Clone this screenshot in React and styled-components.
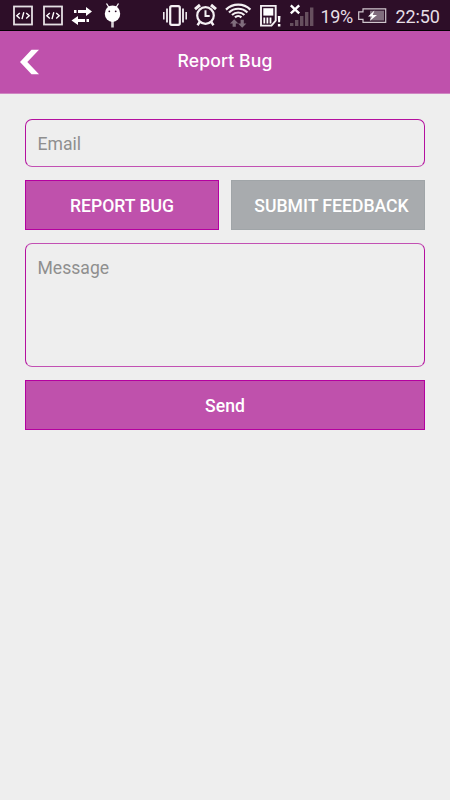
import React from 'react'
import styled, { createGlobalStyle } from 'styled-components';

const GlobalStyle = createGlobalStyle`
  * {
    box-sizing: border-box;
  }

  body {
    margin: 0;
    background-color: #eeeeee;
    font-family: Roboto, "Liberation Sans", sans-serif;
  }
`;

const Screen = styled.div`
  width: 450px;
  height: 800px;
  overflow: hidden;
  background-color: #eeeeee;
`;

const StatusBar = styled.div`
  height: 31px;
  display: flex;
  align-items: flex-start;
  background-color: #2d0e28;
  border-bottom: 1px solid #050004;
`;

const StatusIcon = styled.svg`
  display: block;
  flex: none;
  height: 30px;
  margin-left: ${(props) => props.$gap}px;
`;

const StatusText = styled.span`
  flex: none;
  width: ${(props) => props.$width}px;
  margin-left: ${(props) => props.$gap}px;
  font-size: 18px;
  line-height: 33px;
  letter-spacing: ${(props) => props.$spacing || 0}px;
  white-space: nowrap;
  color: #e6dfe5;
`;

const Header = styled.header`
  height: 63px;
  display: grid;
  grid-template-columns: 60px 1fr 60px;
  align-items: center;
  background-color: #bf51ac;
  border-bottom: 1px solid #cf86c2;
`;

const BackButton = styled.button`
  display: flex;
  padding: 0 0 0 19px;
  background: none;
  border: none;
  cursor: pointer;
`;

const Title = styled.h1`
  margin: 0;
  padding-bottom: 2px;
  font-family: Inter, Roboto, sans-serif;
  font-size: 17.6px;
  font-weight: 500;
  line-height: 24px;
  letter-spacing: 0.12px;
  text-align: center;
  color: #ffffff;
`;

const Form = styled.form`
  display: flex;
  flex-direction: column;
  gap: 13px;
  padding: 25px 25px 0;
`;

const Input = styled.input`
  height: 48px;
  margin: 0;
  padding: 1px 12px 0 11.5px;
  font-family: inherit;
  font-size: 17.6px;
  background: transparent;
  border: 1px solid #b4109f;
  border-bottom-color: #c250b3;
  border-radius: 7px;
  outline: none;

  &::placeholder {
    color: #8f8f8f;
    opacity: 1;
  }
`;

const Message = styled.textarea`
  height: 124px;
  margin: 0;
  padding: 14px 12px 12px 11.5px;
  font-family: inherit;
  font-size: 17.6px;
  line-height: 21px;
  background: transparent;
  border: 1px solid #b4109f;
  border-top-color: #c250b3;
  border-bottom-color: #c250b3;
  border-radius: 7px;
  outline: none;
  resize: none;

  &::placeholder {
    color: #8f8f8f;
    opacity: 1;
  }
`;

const Tabs = styled.div`
  display: grid;
  grid-template-columns: 194px 194px;
  gap: 12px;
`;

const Button = styled.button`
  height: 50px;
  padding: ${(props) => (props.$muted ? '1px 0 0 7px' : '1px 0 0')};
  font-family: inherit;
  font-size: 17.6px;
  font-weight: 500;
  white-space: nowrap;
  color: #ffffff;
  background-color: ${(props) => (props.$muted ? '#a8abae' : '#bf51ac')};
  border: 1px solid ${(props) => (props.$muted ? '#a0a5a8' : '#b400a0')};
  cursor: pointer;
`;

const CodeIcon = ({ gap }) => (
  <StatusIcon $gap={gap} width="20" viewBox="0 0 20 30" fill="none" stroke="#fff">
    <rect x="1" y="6.5" width="18" height="18" stroke="#e4dfe3" strokeWidth="1.8" />
    <path d="M6.8 13l-3 2.7 3 2.7M13.2 13l3 2.7-3 2.7M10.8 12.3l-1.8 6.8" strokeWidth="1.4" />
  </StatusIcon>
);

function StatusIcons() {
  return (
    <>
      <CodeIcon gap={12.5} />
      <CodeIcon gap={10} />
      <StatusIcon $gap={8.5} width="21" viewBox="71 0 21 30" fill="#fff">
        <path d="M74 10h2.5v3H74zM78 10h8V7l6 4.5-6 4.5v-3h-8z" />
        <path d="M89 19h-2.5v3H89zM85 19h-7v-3l-6.5 4.5L78 25v-3h7z" />
      </StatusIcon>
      <StatusIcon $gap={12} width="17" viewBox="104 0 17 30">
        <path d="M106.5 3.5l2.5 4M118.5 3.5l-2.5 4" stroke="#fff" strokeWidth="1.3" />
        <path d="M112.5 20v7.5" stroke="#d8d2d7" strokeWidth="2.6" />
        <ellipse cx="112.5" cy="13.7" rx="7.7" ry="8.3" fill="#fff" />
        <circle cx="109.3" cy="11.3" r="0.9" fill="#2d0e28" />
        <circle cx="115.7" cy="11.3" r="0.9" fill="#2d0e28" />
      </StatusIcon>
      <StatusIcon $gap={41} width="26" viewBox="162 0 26 30" fill="none" stroke="#f4f0f3">
        <rect x="170.2" y="6.2" width="9.6" height="18.6" rx="1.5" strokeWidth="2.2" />
        <path d="M167 8.5v14M183 8.5v14" strokeWidth="1.8" />
        <path d="M163.8 12v7.5M186.2 12v7.5" strokeWidth="1.5" />
      </StatusIcon>
      <StatusIcon $gap={6} width="23" viewBox="194 0 23 30" fill="none" stroke="#f4f0f3">
        <circle cx="205.5" cy="15.5" r="8.3" strokeWidth="2.2" />
        <path d="M205.5 10.3v5.8h4.2" strokeWidth="2" />
        <path d="M195 9.2l5-4.2M216 9.2l-5-4.2" strokeWidth="3" />
        <path d="M199.7 22l-2.2 3.2M211.3 22l2.2 3.2" strokeWidth="2.4" />
      </StatusIcon>
      <StatusIcon $gap={7} width="28" viewBox="224 0 28 30" fill="none" stroke="#f4f0f3" strokeWidth="2.2">
        <path d="M226 9.6a17.5 17.5 0 0 1 24.4 0" />
        <path d="M229 12.5a13.2 13.2 0 0 1 18.4 0" />
        <path d="M232 15a9 9 0 0 1 12.4 0" />
        <path d="M235 17.4a4.6 4.6 0 0 1 6.4 0" />
        <path d="M234.2 19.5l4.2 4.2h-2.6v3.3h-3.2v-3.3H230zM242.2 28l-4.2-4.2h2.6V20h3.2v3.8h2.6z" transform="translate(0 -0.3)" fill="#806d7d" stroke="none" />
      </StatusIcon>
      <StatusIcon $gap={8} width="22" viewBox="260 0 22 30">
        <path d="M261 5.9h14.7v14.8l-4.2 4.9H261z" fill="none" stroke="#f4f0f3" strokeWidth="1.9" />
        <path d="M263.3 8.2h10v7.4h-10z" fill="#fff" />
        <path d="M264.3 17.5v6M267.4 17.5v6M270.5 17.5v6" stroke="#fff" strokeWidth="1.8" />
        <path d="M277.8 16h2.7l-.4 6.3h-1.9zM277.9 24h2.5v2.5h-2.5z" fill="#fff" />
      </StatusIcon>
      <StatusIcon $gap={8} width="24" viewBox="290 0 24 30">
        <path d="M290 23h3.4v3H290zM295 20h3.4v6H295zM300 16h3.4v10H300zM305 12h3.4v14H305zM310 7.5h3.4V26H310z" fill="#67505f" />
        <path d="M290.8 5.3l8.4 8M299.2 5.3l-8.4 8" stroke="#fff" strokeWidth="2.4" />
      </StatusIcon>
      <StatusText $gap={6.5} $width={33} $spacing={-0.35}>19%</StatusText>
      <StatusIcon $gap={4} width="29" viewBox="357 0 29 30">
        <path d="M362 8.8h22.7v13.6H362v-3.1h-4.3v-7.4h4.3z" fill="none" stroke="#cfc6cd" strokeWidth="1.2" />
        <path d="M369 10.7h14v9.8h-14z" fill="#806d7d" />
        <path d="M373.5 10.5l-6.5 6h4l-2.3 4.4 7.3-6h-4.3z" fill="#fff" />
      </StatusIcon>
      <StatusText $gap={9} $width={46} $spacing={-0.1}>22:50</StatusText>
    </>
  );
}

function App() {
  return (
    <>
      <GlobalStyle />
      <Screen>
        <StatusBar>
          <StatusIcons />
        </StatusBar>
        <Header>
          <BackButton type="button" aria-label="Back">
            <svg width="21" height="26" viewBox="0 0 21 26">
              <path d="M12.5 .7H20L8.3 13 20 25.3h-7.5L1 13z" fill="#fff" />
            </svg>
          </BackButton>
          <Title>Report Bug</Title>
        </Header>
        <Form onSubmit={(e) => e.preventDefault()}>
          <Input type="email" placeholder="Email" />
          <Tabs>
            <Button type="button">REPORT BUG</Button>
            <Button type="button" $muted>SUBMIT FEEDBACK</Button>
          </Tabs>
          <Message placeholder="Message" />
          <Button type="submit">Send</Button>
        </Form>
      </Screen>
    </>
  )
}

export default App
